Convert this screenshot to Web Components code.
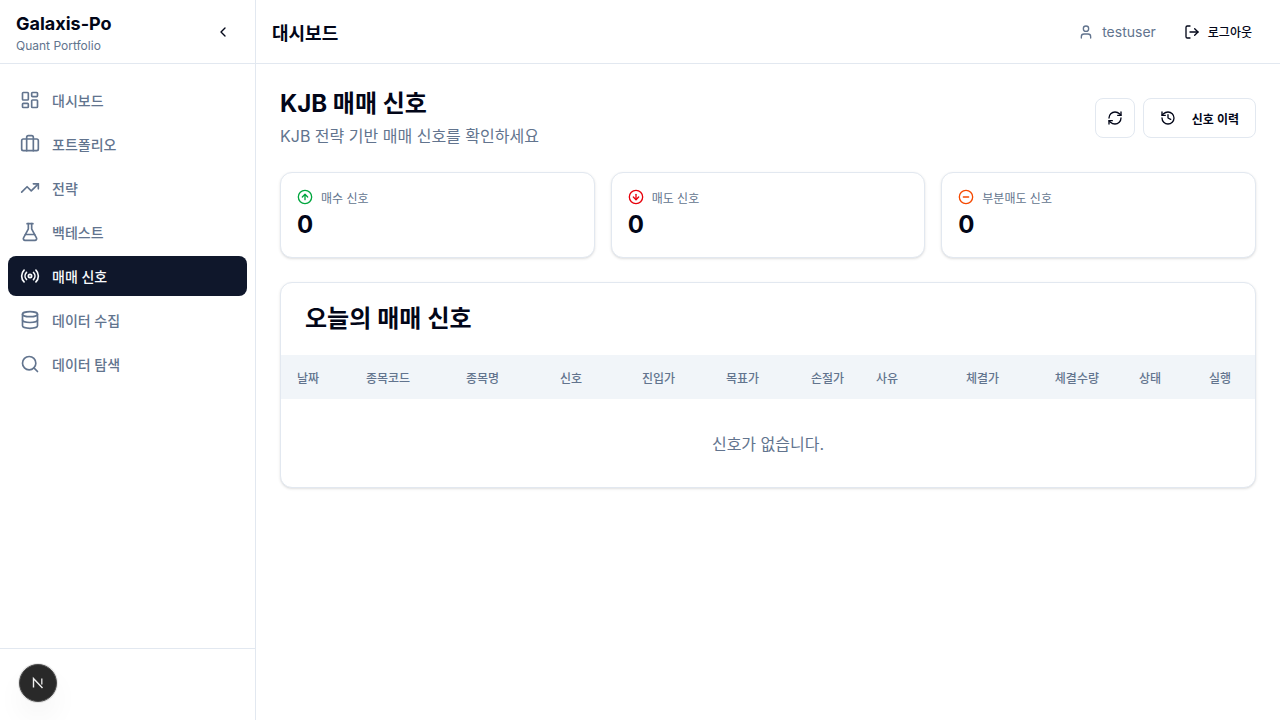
<!DOCTYPE html>
<html lang="ko">
<head>
<meta charset="utf-8">
<title>KJB 매매 신호</title>
<style>
html,body{margin:0;height:100%;background:#fff;}
body{font-family:Inter,"Noto Sans CJK KR",sans-serif;color:#020618;overflow:hidden;}
</style>
</head>
<body>
<app-shell>
  <side-bar slot="side"></side-bar>
  <top-bar slot="top"></top-bar>
  <page-head title-text="KJB 매매 신호" sub="KJB 전략 기반 매매 신호를 확인하세요"></page-head>
  <stat-row>
    <stat-card icon="up" color="#00a63e" label="매수 신호" value="0"></stat-card>
    <stat-card icon="down" color="#e7000b" label="매도 신호" value="0"></stat-card>
    <stat-card icon="minus" color="#f54900" label="부분매도 신호" value="0"></stat-card>
  </stat-row>
  <signal-table></signal-table>
</app-shell>
<dev-badge></dev-badge>
<script>
const ICONS={
 dash:'<rect x="3" y="3" width="7" height="9" rx="1"/><rect x="14" y="3" width="7" height="5" rx="1"/><rect x="14" y="12" width="7" height="9" rx="1"/><rect x="3" y="16" width="7" height="5" rx="1"/>',
 brief:'<path d="M16 20V4a2 2 0 0 0-2-2h-4a2 2 0 0 0-2 2v16"/><rect width="20" height="14" x="2" y="6" rx="2"/>',
 trend:'<polyline points="22 7 13.5 15.5 8.5 10.5 2 17"/><polyline points="16 7 22 7 22 13"/>',
 flask:'<path d="M14 2v6a2 2 0 0 0 .245.96l5.51 10.08A2 2 0 0 1 18 22H6a2 2 0 0 1-1.755-2.96l5.51-10.08A2 2 0 0 0 10 8V2"/><path d="M6.453 15h11.094"/><path d="M8.5 2h7"/>',
 radio:'<path d="M4.9 19.1C1 15.2 1 8.8 4.9 4.9"/><path d="M7.8 16.2c-2.3-2.3-2.3-6.1 0-8.5"/><circle cx="12" cy="12" r="2"/><path d="M16.2 7.8c2.3 2.3 2.3 6.1 0 8.5"/><path d="M19.1 4.9C23 8.8 23 15.1 19.1 19"/>',
 db:'<ellipse cx="12" cy="5" rx="9" ry="3"/><path d="M3 5V19A9 3 0 0 0 21 19V5"/><path d="M3 12A9 3 0 0 0 21 12"/>',
 search:'<circle cx="11" cy="11" r="8"/><path d="m21 21-4.3-4.3"/>',
 left:'<path d="m15 18-6-6 6-6"/>',
 user:'<path d="M19 21v-2a4 4 0 0 0-4-4H9a4 4 0 0 0-4 4v2"/><circle cx="12" cy="7" r="4"/>',
 logout:'<path d="M9 21H5a2 2 0 0 1-2-2V5a2 2 0 0 1 2-2h4"/><polyline points="16 17 21 12 16 7"/><line x1="21" x2="9" y1="12" y2="12"/>',
 refresh:'<path d="M3 12a9 9 0 0 1 9-9 9.75 9.75 0 0 1 6.74 2.74L21 8"/><path d="M21 3v5h-5"/><path d="M21 12a9 9 0 0 1-9 9 9.75 9.75 0 0 1-6.74-2.74L3 16"/><path d="M8 16H3v5"/>',
 history:'<path d="M3 12a9 9 0 1 0 9-9 9.75 9.75 0 0 0-6.74 2.74L3 8"/><path d="M3 3v5h5"/><path d="M12 7v5l4 2"/>',
 up:'<circle cx="12" cy="12" r="10"/><path d="m16 12-4-4-4 4"/><path d="M12 16V8"/>',
 down:'<circle cx="12" cy="12" r="10"/><path d="M12 8v8"/><path d="m8 12 4 4 4-4"/>',
 minus:'<circle cx="12" cy="12" r="10"/><path d="M8 12h8"/>'
};
class XIcon extends HTMLElement{
 connectedCallback(){
  const s=this.getAttribute('size')||16, n=this.getAttribute('name');
  this.attachShadow({mode:'open'}).innerHTML=`<style>:host{display:block;flex:none;width:${s}px;height:${s}px;line-height:0}svg{display:block}</style><svg width="${s}" height="${s}" viewBox="0 0 24 24" fill="none" stroke="currentColor" stroke-width="2" stroke-linecap="round" stroke-linejoin="round">${ICONS[n]}</svg>`;
 }
}
customElements.define('x-icon',XIcon);

class AppShell extends HTMLElement{
 constructor(){super();this.attachShadow({mode:'open'}).innerHTML=`<style>
 :host{display:flex;height:720px;width:1280px}
 .col{flex:1;min-width:0;display:flex;flex-direction:column}
 main{padding:24px;display:flex;flex-direction:column;gap:24px}
 </style><slot name="side"></slot><div class="col"><slot name="top"></slot><main><slot></slot></main></div>`;}
}
customElements.define('app-shell',AppShell);

class SideBar extends HTMLElement{
 constructor(){super();
 const items=[['dash','대시보드'],['brief','포트폴리오'],['trend','전략'],['flask','백테스트'],['radio','매매 신호',1],['db','데이터 수집'],['search','데이터 탐색']];
 this.attachShadow({mode:'open'}).innerHTML=`<style>
 :host{display:flex;flex-direction:column;width:256px;flex:none;height:720px;box-sizing:border-box;border-right:1px solid #e2e8f0;background:#fff}
 .brand{height:64px;box-sizing:border-box;border-bottom:1px solid #e2e8f0;display:flex;align-items:center;justify-content:space-between;padding:0 24px 0 16px}
 .name{font-size:18px;font-weight:700;line-height:28px;color:#020618}
 .sub{font-size:12px;line-height:16px;color:#62748e}
 .back{color:#020618}
 nav{flex:1;padding:16px 8px;display:flex;flex-direction:column;gap:4px}
 .foot{height:72px;box-sizing:border-box;border-top:1px solid #e2e8f0}
 </style>
 <div class="brand"><div><div class="name">Galaxis-Po</div><div class="sub">Quant Portfolio</div></div><x-icon class="back" name="left" size="16"></x-icon></div>
 <nav>${items.map(i=>`<nav-item icon="${i[0]}" ${i[2]?'active':''}>${i[1]}</nav-item>`).join('')}</nav>
 <div class="foot"></div>`;}
}
customElements.define('side-bar',SideBar);

class NavItem extends HTMLElement{
 connectedCallback(){
 this.attachShadow({mode:'open'}).innerHTML=`<style>
 :host{display:flex;align-items:center;gap:12px;height:40px;padding:0 12px;border-radius:8px;color:#62748e;font-size:14px;font-weight:500}
 :host([active]){background:#0f172b;color:#f8fafc}
 </style><x-icon name="${this.getAttribute('icon')}" size="20"></x-icon><span><slot></slot></span>`;}
}
customElements.define('nav-item',NavItem);

class TopBar extends HTMLElement{
 constructor(){super();this.attachShadow({mode:'open'}).innerHTML=`<style>
 :host{display:flex;align-items:center;justify-content:space-between;height:64px;box-sizing:border-box;border-bottom:1px solid #e2e8f0;padding:0 16px;background:#fff}
 h1{margin:0;font-size:18px;font-weight:600;color:#020618}
 .r{display:flex;align-items:center;gap:16px}
 .u{display:flex;align-items:center;gap:8px;color:#62748e;font-size:14px}
 .o{display:flex;align-items:center;gap:8px;height:36px;padding:0 12px;font-size:12px;font-weight:500;color:#020618}
 </style><h1>대시보드</h1><div class="r"><div class="u"><x-icon name="user"></x-icon><span>testuser</span></div><div class="o"><x-icon name="logout"></x-icon><span>로그아웃</span></div></div>`;}
}
customElements.define('top-bar',TopBar);

class PageHead extends HTMLElement{
 connectedCallback(){this.attachShadow({mode:'open'}).innerHTML=`<style>
 :host{display:flex;align-items:center;justify-content:space-between}
 h2{margin:0;font-size:24px;line-height:32px;font-weight:700;color:#020618}
 p{margin:4px 0 0;font-size:16px;line-height:24px;color:#62748e}
 .b{display:flex;gap:8px}
 .btn{height:40px;box-sizing:border-box;border:1px solid #e2e8f0;border-radius:8px;background:#fff;display:flex;align-items:center;color:#020618;font-size:12px;font-weight:600}
 .i{width:40px;justify-content:center}
 .t{padding:0 16px;gap:16px}
 </style><div><h2>${this.getAttribute('title-text')}</h2><p>${this.getAttribute('sub')}</p></div>
 <div class="b"><div class="btn i"><x-icon name="refresh"></x-icon></div><div class="btn t"><x-icon name="history"></x-icon><span>신호 이력</span></div></div>`;}
}
customElements.define('page-head',PageHead);

class StatRow extends HTMLElement{
 constructor(){super();this.attachShadow({mode:'open'}).innerHTML=`<style>:host{display:grid;grid-template-columns:repeat(3,1fr);gap:16px}</style><slot></slot>`;}
}
customElements.define('stat-row',StatRow);

class StatCard extends HTMLElement{
 connectedCallback(){this.attachShadow({mode:'open'}).innerHTML=`<style>
 :host{display:block;box-sizing:border-box;height:86px;padding:16px;border:1px solid #e2e8f0;border-radius:12px;background:#fff;box-shadow:0 1px 3px rgba(0,0,0,.1),0 1px 2px -1px rgba(0,0,0,.1)}
 .l{display:flex;align-items:center;gap:8px;height:16px;font-size:12px;color:#62748e}
 x-icon{color:${this.getAttribute('color')}}
 .v{margin-top:4px;font-size:24px;line-height:32px;font-weight:700;color:#020618}
 </style><div class="l"><x-icon name="${this.getAttribute('icon')}"></x-icon><span>${this.getAttribute('label')}</span></div><div class="v">${this.getAttribute('value')}</div>`;}
}
customElements.define('stat-card',StatCard);

class SignalTable extends HTMLElement{
 constructor(){super();
 const cols=[['날짜',69,'l'],['종목코드',100,'l'],['종목명',85,'l'],['신호',72,'c'],['진입가',84,'r'],['목표가',84,'r'],['손절가',85,'r'],['사유',71,'l'],['체결가',84,'r'],['체결수량',100,'r'],['상태',70,'c'],['실행',70,'c']];
 this.attachShadow({mode:'open'}).innerHTML=`<style>
 :host{display:block;border:1px solid #e2e8f0;border-radius:12px;background:#fff;box-shadow:0 1px 3px rgba(0,0,0,.1),0 1px 2px -1px rgba(0,0,0,.1);overflow:hidden}
 h3{margin:0;padding:24px;font-size:24px;line-height:24px;font-weight:600;color:#020618}
 table{width:100%;table-layout:fixed;border-collapse:collapse}
 th{height:44px;padding:0 16px;box-sizing:border-box;background:#f1f5f9;font-size:12px;font-weight:500;color:#62748e;white-space:nowrap}
 .l{text-align:left}.c{text-align:center}.r{text-align:right}
 td{height:88px;padding:0;text-align:center;font-size:16px;color:#62748e}
 </style><h3>오늘의 매매 신호</h3><table><colgroup>${cols.map(c=>`<col style="width:${c[1]}px">`).join('')}</colgroup>
 <thead><tr>${cols.map(c=>`<th class="${c[2]}">${c[0]}</th>`).join('')}</tr></thead>
 <tbody><tr><td colspan="12">신호가 없습니다.</td></tr></tbody></table>`;}
}
customElements.define('signal-table',SignalTable);

class DevBadge extends HTMLElement{
 constructor(){super();this.attachShadow({mode:'open'}).innerHTML=`<style>
 :host{position:fixed;left:19px;top:664px;width:36px;height:36px;border-radius:50%;background:#292929;border:1px solid #4a4a4a;box-sizing:content-box;margin:-0.5px;box-shadow:0 16px 32px -8px rgba(0,0,0,.12),0 0 0 1px rgba(0,0,0,.1);display:flex;align-items:center;justify-content:center}
 </style><svg width="16" height="16" viewBox="0 0 16 16" fill="none" aria-hidden="true"><path d="M3.5 12.5V3.5L12.5 13" stroke="#f0f0f0" stroke-width="1.4"/><path d="M11.8 3.5V9.5" stroke="#ddd" stroke-width="1.4"/></svg>`;}
}
customElements.define('dev-badge',DevBadge);
</script>
</body>
</html>
